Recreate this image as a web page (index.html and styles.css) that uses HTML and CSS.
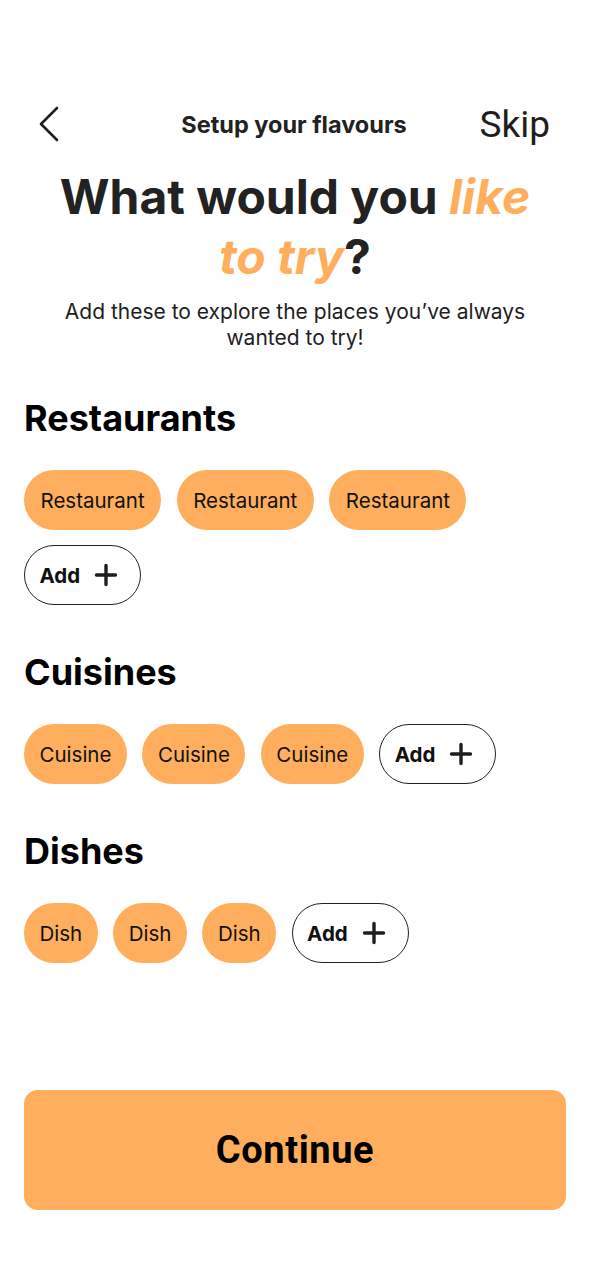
FILE: index.html
```html
<!DOCTYPE html>
<html lang="en">
<head>
<meta charset="utf-8">
<title>Setup your flavours</title>
<link rel="stylesheet" href="styles.css">
</head>
<body>
<div class="screen">
  <header class="topbar">
    <button class="back" aria-label="Back">
      <svg width="22" height="36" viewBox="0 0 22 36"><path d="M19 2 L3 18 L19 34" fill="none" stroke="#1e1e1e" stroke-width="2.6" stroke-linecap="round" stroke-linejoin="round"/></svg>
    </button>
    <div class="topbar-title">Setup your flavours</div>
    <button class="skip">Skip</button>
  </header>

  <h1 class="title">What would you <em>like</em><br><em>to try</em>?</h1>
  <p class="subtitle">Add these to explore the places you’ve always wanted to try!</p>

  <section class="group">
    <h2 class="group-title">Restaurants</h2>
    <div class="chips">
      <span class="chip chip-long">Restaurant</span>
      <span class="chip chip-long">Restaurant</span>
      <span class="chip chip-long">Restaurant</span>
      <span class="chip chip-add">Add <svg width="24" height="24" viewBox="0 0 24 24"><path d="M12 2.5V21.5M2.5 12H21.5" stroke="#1e1e1e" stroke-width="3.4" stroke-linecap="round"/></svg></span>
    </div>
  </section>

  <section class="group">
    <h2 class="group-title">Cuisines</h2>
    <div class="chips">
      <span class="chip">Cuisine</span>
      <span class="chip">Cuisine</span>
      <span class="chip">Cuisine</span>
      <span class="chip chip-add">Add <svg width="24" height="24" viewBox="0 0 24 24"><path d="M12 2.5V21.5M2.5 12H21.5" stroke="#1e1e1e" stroke-width="3.4" stroke-linecap="round"/></svg></span>
    </div>
  </section>

  <section class="group">
    <h2 class="group-title">Dishes</h2>
    <div class="chips">
      <span class="chip">Dish</span>
      <span class="chip">Dish</span>
      <span class="chip">Dish</span>
      <span class="chip chip-add">Add <svg width="24" height="24" viewBox="0 0 24 24"><path d="M12 2.5V21.5M2.5 12H21.5" stroke="#1e1e1e" stroke-width="3.4" stroke-linecap="round"/></svg></span>
    </div>
  </section>

  <div class="spacer"></div>
  <button class="continue">Continue</button>
</div>
</body>
</html>
```

FILE: styles.css
```css
* { box-sizing: border-box; }
html, body { margin: 0; padding: 0; background: #fff; }
body {
  font-family: Inter, "Noto Sans", sans-serif;
  color: #1e1e1e;
}
.screen {
  min-height: 1278px;
  display: flex;
  flex-direction: column;
  padding: 100px 24px 68px;
}
.topbar {
  height: 48px;
  display: grid;
  grid-template-columns: 1fr auto 1fr;
  align-items: center;
  padding: 0 16px 0 14px;
}
.back, .skip {
  background: none;
  border: 0;
  padding: 0;
  cursor: pointer;
  color: #1e1e1e;
  font-family: Inter, sans-serif;
}
.back { justify-self: start; display: flex; }
.skip {
  justify-self: end;
  font-size: 37px;
  font-weight: 400;
  font-family: Roboto, sans-serif;
}
.topbar-title {
  font-size: 23.5px;
  font-weight: 700;
  color: #222;
}
.title {
  margin: 19px 0 0;
  text-align: center;
  font-size: 48px;
  line-height: 60px;
  font-weight: 700;
  color: #222;
}
.title em {
  color: #feae5c;
  font-style: italic;
}
.subtitle {
  margin: 12px 20px 0;
  text-align: center;
  font-size: 21px;
  line-height: 26px;
  color: #1e1e1e;
}
.group { margin-top: 47px; }
.group-title {
  margin: 0 0 32px;
  font-size: 36px;
  line-height: 40px;
  font-weight: 700;
  color: #000;
}
.chips {
  display: flex;
  flex-wrap: wrap;
  gap: 15px 15.5px;
}
.chip {
  height: 60px;
  display: inline-flex;
  align-items: center;
  padding: 0 15.5px;
  border-radius: 30px;
  background: #feae5c;
  font-size: 20.5px;
  color: #111;
}
.chip-long { padding: 0 16.5px; }
.chip-add {
  background: #fff;
  border: 1.5px solid #222;
  font-weight: 700;
  gap: 14px;
  padding: 0 22px 0 14.5px;
}
.spacer { flex: 1; }
.continue {
  height: 120px;
  width: 100%;
  border: 0;
  border-radius: 14px;
  background: #feae5c;
  font-family: Roboto, sans-serif;
  font-size: 38px;
  letter-spacing: 0.6px;
  font-weight: 700;
  color: #000;
}
```
